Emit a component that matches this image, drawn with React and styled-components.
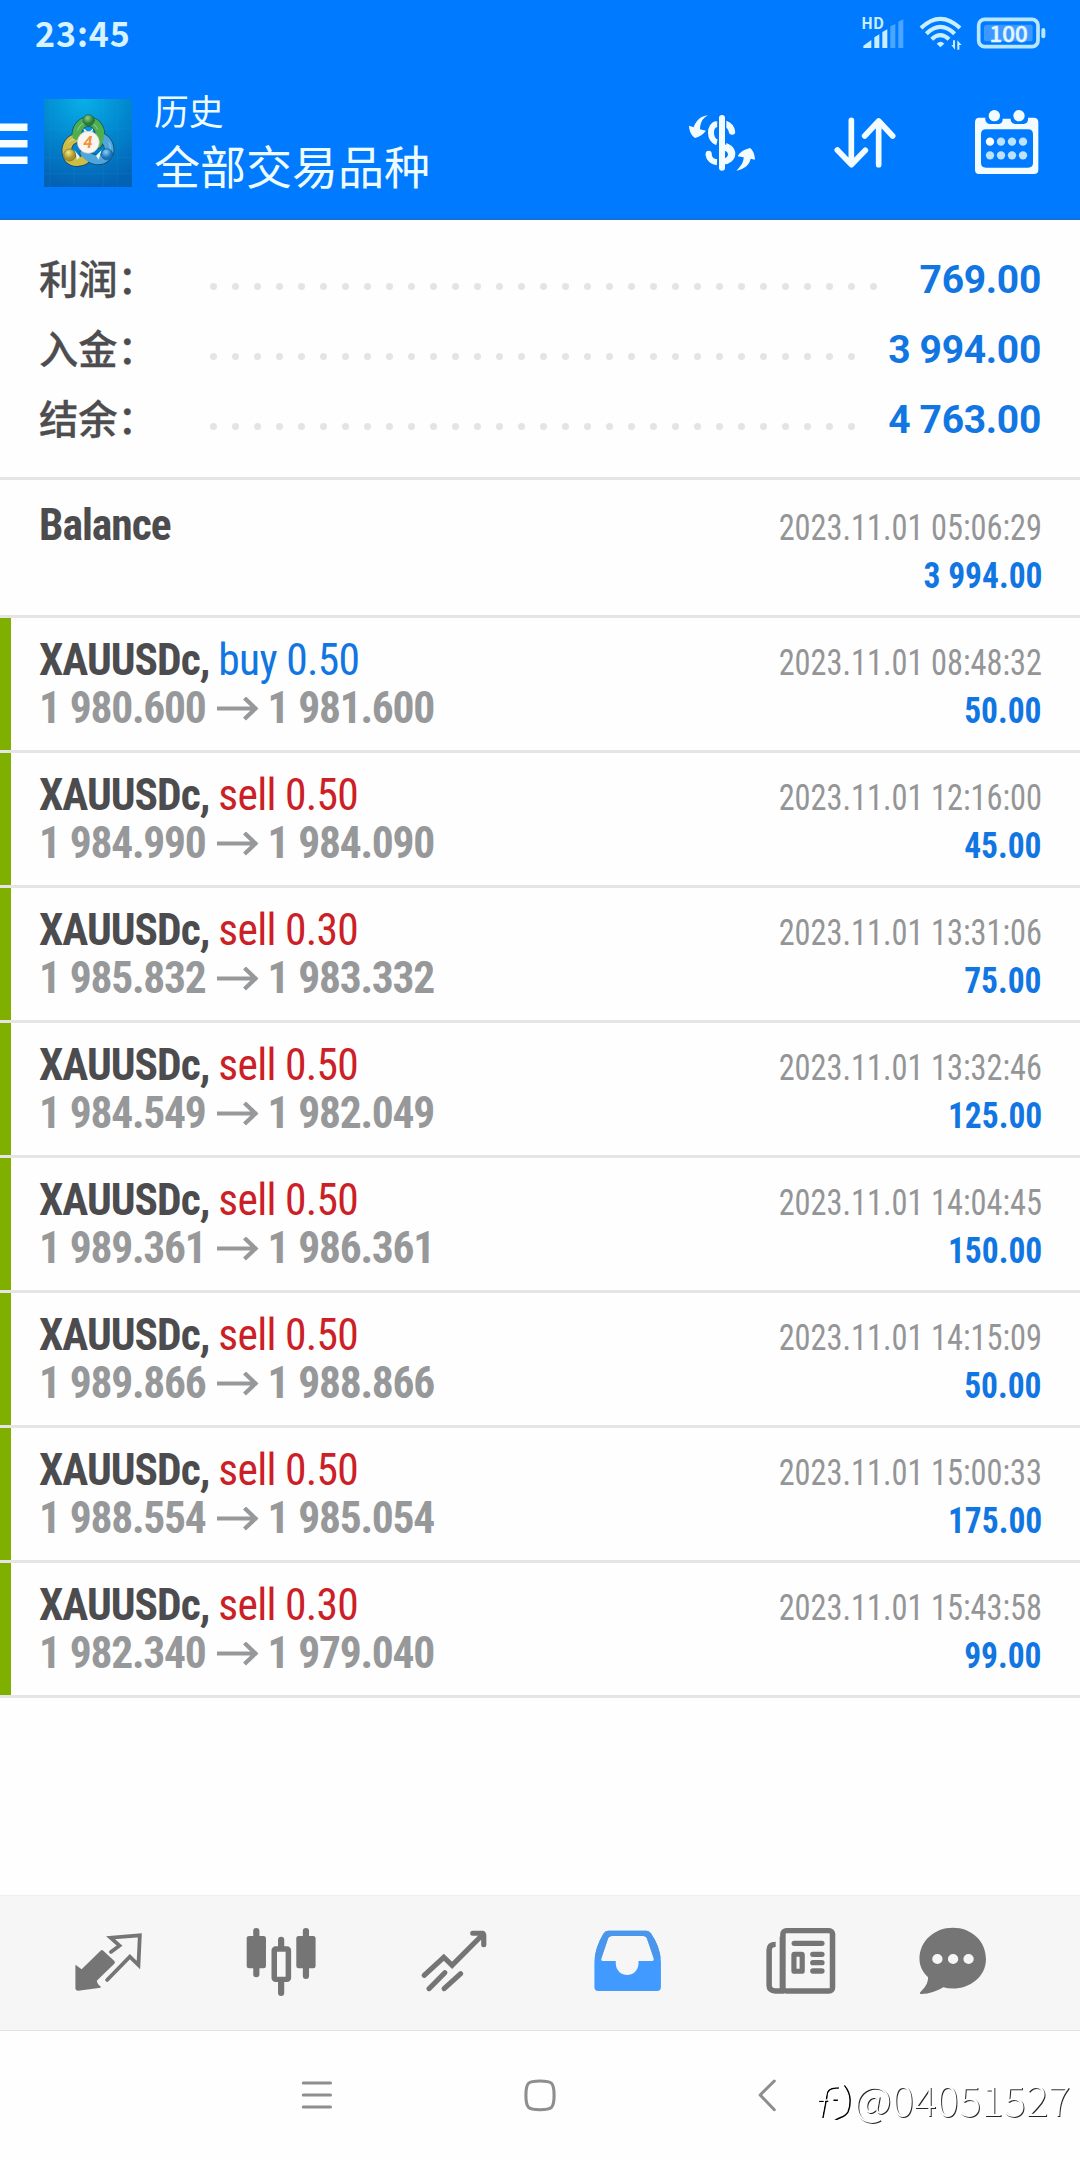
import React from "react";
import styled, { createGlobalStyle } from "styled-components";

const CJK = `"Noto Sans CJK SC", "Noto Sans", sans-serif`;
const LATIN = `Roboto, "Noto Sans CJK SC", sans-serif`;
const BLUE = "#1276e2";

const GlobalStyle = createGlobalStyle`
  * { box-sizing: border-box; }
  body { margin: 0; background: #fefefe; font-family: ${LATIN}; }
`;

const Screen = styled.div`
  position: relative;
  width: 1080px;
  height: 2160px;
  display: flex;
  flex-direction: column;
  overflow: hidden;
  background: #fefefe;
`;

const Header = styled.header`
  height: 220px;
  flex: none;
  background: #007aff;
  border-bottom: 2px solid #1272d8;
  color: #fff;
`;

const StatusBar = styled.div`
  height: 66px;
  display: flex;
  align-items: center;
  justify-content: space-between;
  padding: 0 34px 0 35px;
`;

const Clock = styled.time`
  font: 700 34px/40px ${CJK};
  letter-spacing: 0.9px;
  color: #d6f3ff;
`;

const StatusIcons = styled.div`
  display: flex;
  align-items: center;
  gap: 14px;
`;

const AppBar = styled.div`
  height: 154px;
  display: flex;
  align-items: center;
  padding-right: 37px;
`;

const Logo = styled.div`
  width: 88px;
  height: 88px;
  margin-left: 16px;
  svg { display: block; }
`;

const Titles = styled.div`
  flex: 1;
  display: flex;
  flex-direction: column;
  margin-left: 22px;
  padding-bottom: 4px;
  gap: 2px;
  font-family: ${CJK};
  color: #eefbff;
`;

const Subtitle = styled.span`
  font-size: 34.8px;
  line-height: 44px;
`;

const Title = styled.h1`
  margin: 0;
  font-size: 46px;
  font-weight: 400;
  line-height: 60px;
`;

const Actions = styled.div`
  display: flex;
  gap: 70.5px;
`;

const Summary = styled.section`
  height: 260px;
  flex: none;
  padding: 24px 39px 0 39px;
  border-bottom: 3px solid #e5e5e5;
`;

const SummaryRow = styled.div`
  height: 70px;
  display: flex;
  align-items: center;
`;

const Label = styled.span`
  width: 171px;
  padding-bottom: 5px;
  font: 500 39.3px/60px ${CJK};
  -webkit-text-stroke: 0.3px #4d4d4f;
  color: #4d4d4f;
`;

const Leader = styled.div`
  flex: 1;
  height: 7px;
  margin: 15px 27px 0 0;
  display: flex;
  flex-wrap: wrap;
  column-gap: 15px;
  overflow: hidden;
`;

const Dot = styled.i`
  width: 7px;
  height: 7px;
  border-radius: 50%;
  background: #e4e4e4;
`;

const Total = styled.span`
  font: 700 39px/48px ${LATIN};
  letter-spacing: -0.3px;
  color: ${BLUE};
  padding-top: 1px;
`;

const Row = styled.article`
  height: ${(p) => (p.$trade ? 135 : 138)}px;
  flex: none;
  padding: ${(p) => (p.$trade ? 0 : 3)}px 38px 0 0;
  display: flex;
  justify-content: space-between;
  border-bottom: 3px solid #e5e5e5;
  font-stretch: 75%;
`;

const Stripe = styled.div`
  width: 11px;
  height: 132px;
  background: ${(p) => (p.$closed ? "#7fb000" : "transparent")};
`;

const Lines = styled.div`
  flex: ${(p) => (p.$end ? "none" : 1)};
  display: flex;
  flex-direction: column;
  align-items: ${(p) => (p.$end ? "flex-end" : "flex-start")};
  padding: 18px 0 0 ${(p) => (p.$end ? 0 : 28)}px;
  line-height: 48px;
  white-space: pre;
`;

const Symbol = styled.div`
  font-size: 43.5px;
  font-weight: 700;
  letter-spacing: -1px;
  color: #4c4c4e;
  padding-top: 1px;
  height: 49px;
`;

const Side = styled.span`
  font-weight: 400;
  letter-spacing: -0.7px;
  color: ${(p) => (p.$side === "buy" ? BLUE : "#cb2026")};
`;

const Prices = styled.div`
  display: flex;
  align-items: center;
  font-size: 43.5px;
  font-weight: 700;
  letter-spacing: -1.25px;
  word-spacing: 1.2px;
  color: #97989a;
  svg { margin: 0 8.5px 0 11.5px; }
`;

const Stamp = styled.time`
  font-size: 37px;
  padding-top: 3px;
  height: 48px;
  color: #949597;
  transform: scaleX(0.875);
  transform-origin: right center;
`;

const Profit = styled.span`
  font-size: 37px;
  font-weight: 700;
  padding-top: 3px;
  color: ${BLUE};
  transform: scaleX(0.905);
  transform-origin: right center;
`;

const Spacer = styled.div`
  flex: 1;
`;

const TabBar = styled.nav`
  height: 136px;
  flex: none;
  display: grid;
  grid-template-columns: repeat(5, 173px) 132px;
  justify-items: center;
  padding: 27px 0 0 22px;
  background: #f6f6f6;
  border-top: 1px solid #efefef;
  border-bottom: 1px solid #e2e2e2;
`;

const SystemNav = styled.nav`
  height: 129px;
  flex: none;
  display: grid;
  grid-template-columns: repeat(3, 225px);
  justify-content: center;
  justify-items: center;
  padding-top: 42px;
`;

const Watermark = styled.div`
  position: absolute;
  right: 9px;
  bottom: 32px;
  display: flex;
  align-items: center;
  font: 300 41.4px/60px ${CJK};
  letter-spacing: 0.2px;
  color: #fff;
  text-shadow: 1px 1px 0 rgba(0, 0, 0, 0.85);
  will-change: transform;
`;

const Icon = styled.svg`
  display: block;
  overflow: visible;
`;

const Pic = ({ w = 72, h = 72, box, children }) => (
  <Icon width={w} height={h} viewBox={box} preserveAspectRatio="none" fill="none" strokeLinecap="round" strokeLinejoin="round">
    {children}
  </Icon>
);

const Signal = () => (
  <Pic w={44} h={35} box="602 45 132 105">
    <text x="603" y="85" fontSize="46" fontWeight="600" fontFamily="Noto Sans CJK SC, sans-serif" fill="#c8eeff">HD</text>
    <path d="M609 141v-7l24-17v24zM642 141v-32l15-9v41zM666 141V93l15-8v56z" fill="#c8eeff" />
    <path d="M690 141V76l15-7v72zM714 141V62l15-7v86z" fill="#4ba6ff" />
  </Pic>
);

const Wifi = () => (
  <Pic w={44} h={36} box="776 48 132 108">
    <g stroke="#c8eeff" strokeWidth="12.500" strokeLinecap="butt">
      <path d="M782 87q58-55 117 0" />
      <path d="M798 104q42-41 85 0" />
      <path d="M814 121q26-25 52 0" />
    </g>
    <path d="M829 134q12-12 23 0l-12 11z" fill="#c8eeff" />
    <path d="M884 124v28l-11-14h5v-14zM891 152v-28l13 14h-7v14z" fill="#c8eeff" />
  </Pic>
);

const Battery = () => (
  <Pic w={69} h={32} box="950 51 207 96">
    <rect x="955" y="58" width="178" height="82" rx="18" stroke="#b9e6ff" strokeWidth="11" />
    <rect x="971" y="74" width="146" height="50" rx="8" fill="#3d99ff" />
    <rect x="1143" y="84" width="12" height="31" rx="6" fill="#b9e6ff" />
    <text x="1045" y="125" textAnchor="middle" fontSize="67" fontWeight="500" fontFamily="Noto Sans CJK SC, sans-serif" fill="#e2f7ff" stroke="#e2f7ff" strokeWidth="1.500">100</text>
  </Pic>
);

const Menu = () => (
  <Pic w={28} h={42} box="0 121 28 42">
    <path d="M0 122.500h27.500v7.500H0zM0 139h27.500v7.500H0zM0 155.500h27.500v7.500H0z" fill="#f6fdff" />
  </Pic>
);

const MetaLogo = () => (
  <Pic w={88} h={88} box="12 12 264 264">
    <defs>
      <radialGradient id="sky" cx=".45" cy="0" r="1">
        <stop offset="0" stopColor="#08b0e8" />
        <stop offset=".55" stopColor="#0284cd" />
        <stop offset="1" stopColor="#0462b4" />
      </radialGradient>
      <radialGradient id="green" cx=".4" cy=".3"><stop offset="0" stopColor="#8fd080" /><stop offset="1" stopColor="#277c37" /></radialGradient>
      <radialGradient id="gold" cx=".4" cy=".3"><stop offset="0" stopColor="#f3ea84" /><stop offset="1" stopColor="#a8932a" /></radialGradient>
      <radialGradient id="azure" cx=".4" cy=".3"><stop offset="0" stopColor="#8ad4f6" /><stop offset="1" stopColor="#1a71b8" /></radialGradient>
    </defs>
    <rect x="12" y="12" width="264" height="264" fill="url(#sky)" />
    <path d="M30 12v264M102 12v264M190 12v264M232 12v264M12 102h264M12 188h264M12 236h264" stroke="#44b4e8" strokeOpacity=".16" strokeWidth="2" />
    <g strokeWidth="31" stroke="#173f50" strokeOpacity=".75">
      <path d="M111 128c-34 10-36 42-24 62 12 14 35 12 47 4" />
      <path d="M186 128c26 16 26 44 13 57-20 19-51 8-65-11" />
      <path d="M110 122c0-56 70-56 70-2l-7 26" />
    </g>
    <g strokeWidth="26">
      <path d="M111 128c-34 10-36 42-24 62 12 14 35 12 47 4" stroke="#cdbd45" />
      <path d="M186 128c26 16 26 44 13 57-20 19-51 8-65-11" stroke="#4fa6dc" />
      <path d="M110 122c0-56 70-56 70-2l-7 26" stroke="#4fae50" />
    </g>
    <path d="M113 105c11-30 48-33 59-3M84 143c7-8 14-9 19-10M207 143c7 12 5 29-5 37" stroke="#fff" strokeOpacity=".4" strokeWidth="3" />
    <path d="M130 100l16 12 14-12-4 14h-22zM103 165l17 21-9 8zM185 165l-17 17 8 12z" fill="#e9f5ea" />
    <g stroke="#22604d" strokeWidth="2">
      <circle cx="146" cy="76" r="17" fill="url(#green)" />
      <circle cx="89" cy="180" r="18" fill="url(#gold)" stroke="#776d27" />
      <circle cx="201" cy="178" r="17" fill="url(#azure)" stroke="#185b91" />
    </g>
    <circle cx="145" cy="142" r="33" fill="#faf5f0" stroke="#c9c5ad" strokeWidth="2" />
    <text x="144" y="160" textAnchor="middle" fontSize="50" fontWeight="700" fontStyle="italic" fontFamily="Roboto, sans-serif" fill="#f0953c">4</text>
  </Pic>
);

const Currency = () => (
  <Pic box="78 321 216 216">
    <path d="M144 346c-17 9-23 22-24 42l18 4c-10 12-20 19-33 22-10-8-17-18-18-37l14 5c7-20 21-34 43-36z" fill="#f2fcff" />
    <path d="M229 512c17-16 22-28 22-40l-18-3c6-12 18-20 37-25 8 6 14 17 15 35l-13-3c-4 18-18 31-43 36z" fill="#f2fcff" />
    <path d="M216 395c-4-27-34-26-34-26" stroke="#f2fcff" strokeWidth="19" />
    <path d="M171 372c-24 3-24 48 0 55M182 433c47 8 45 50 3 54M145 462c2 14 13 24 26 25" stroke="#f2fcff" strokeWidth="18" strokeLinecap="butt" />
    <circle cx="146" cy="461" r="9" fill="#f2fcff" />
    <path d="M186 354v150" stroke="#007aff" strokeWidth="26" strokeLinecap="butt" />
    <path d="M186 440c37 6 34 39 3 46" stroke="#f2fcff" strokeWidth="18" strokeLinecap="butt" />
    <path d="M186 354v149" stroke="#f2fcff" strokeWidth="18" />
  </Pic>
);

const Sort = () => (
  <Pic box="507 321 216 216">
    <path d="M574 361v132M532 450l42 44 42-43M656 494V363M614 408l42-45 42 45" stroke="#f2fcff" strokeWidth="17" />
  </Pic>
);

const Calendar = () => (
  <Pic box="933 321 216 216">
    <path fillRule="evenodd" d="M957 353h19v6q2 12 14 13h27q10-1 11-12v-4h24v4q2 11 13 12h26q12-2 13-13v-6h18q13 0 13 14v142q0 13-13 13H957q-12 0-12-13V367q0-14 12-14zM978 388q-15 0-15 15v86q0 14 15 14h126q15 0 15-14v-86q0-15-15-15z" fill="#f2fcff" />
    <circle cx="1003" cy="347" r="17" fill="#f2fcff" />
    <circle cx="1077" cy="347" r="17" fill="#f2fcff" />
    {[0, 1, 2, 3].map((i) => (
      <g key={i}>
        <circle cx={990 + i * 33} cy="425" r="12.500" fill={i ? "#bce2ff" : "#fff"} />
        <circle cx={990 + i * 33} cy="466" r="12.500" fill="#bce2ff" />
      </g>
    ))}
  </Pic>
);

const QuotesIcon = () => (
  <Pic box="212 99 209 216">
    <path d="M219 224l18 14 55-56q4-4 8 0l32 31q4 4 0 8l-51 51q3 13 11 17v4l-65 9q-8 0-8-8z" fill="#757575" />
    <path d="M322 186l25-19-26-24 85-7-4 89-25-25-66 70" stroke="#757575" strokeWidth="11" strokeLinejoin="miter" />
  </Pic>
);

const ChartIcon = () => (
  <Pic box="714 99 209 216">
    <g fill="#757575">
      <rect x="716" y="138" width="56" height="97" rx="7" />
      <rect x="860" y="138" width="56" height="97" rx="7" />
    </g>
    <rect x="796" y="177" width="41" height="91" rx="4" stroke="#757575" strokeWidth="16" />
    <path d="M744 123v130M888 123v135M816 149v20M816 276v33" stroke="#757575" strokeWidth="18" />
  </Pic>
);

const TradeIcon = () => (
  <Pic box="1217 99 209 216">
    <g stroke="#757575" strokeWidth="15">
      <path d="M1232 256l57-54 24 24 82-85" strokeLinejoin="miter" />
      <path d="M1373 130h30l2 5v29" />
      <path d="M1386 130h20v22z" fill="#757575" strokeWidth="4" />
      <path d="M1246 296l46-48M1290 296l48-45" />
    </g>
  </Pic>
);

const HistoryIcon = () => (
  <Pic box="151 99 209 216">
    <path fillRule="evenodd" d="M198 122h111q8 0 13 8 28 43 29 85v77q0 11-11 11H169q-11 0-11-11v-77q1-42 26-84 6-9 14-9zM209 138q-8 0-11 6l-20 62q-1 7 6 7h36v8c3 45 63 45 66 0v-8h38q7 0 6-7l-20-62q-3-6-10-6z" fill="#419aff" />
    <path d="M198 122h111q8 0 13 8 25 38 28 75h-18l-22-61q-3-6-10-6h-91q-8 0-11 6l-20 61h-19q4-37 25-74 6-9 14-9z" fill="#4a96ea" />
  </Pic>
);

const NewsIcon = () => (
  <Pic box="654 99 209 216">
    <g stroke="#757575" strokeWidth="16">
      <rect x="706" y="122" width="144" height="181" rx="10" />
      <path d="M685 163c-14 0-19 7-19 17v106q0 17 18 17h25" strokeLinecap="butt" />
      <path d="M739 160h80M793 193h26M793 218h26M793 243h26" />
      <rect x="738" y="193" width="24" height="51" rx="2" strokeWidth="15" />
    </g>
    <path d="M704 140v156" stroke="#757575" strokeWidth="15" strokeLinecap="butt" />
  </Pic>
);

const ChatIcon = () => (
  <Pic box="1094.8 99 209 216">
    <path fillRule="evenodd" d="M1199 113c54 0 96 40 96 94 0 64-66 101-124 85-20 12-39 20-64 20-5 0-5-3-2-6 15-15 22-28 22-44-16-16-25-34-25-55 0-54 43-94 97-94zM1139 207a15 15 0 1 0 30 0a15 15 0 1 0-30 0zM1184.500 207a15 15 0 1 0 30 0a15 15 0 1 0-30 0zM1229.500 207a15 15 0 1 0 30 0a15 15 0 1 0-30 0z" fill="#757575" />
  </Pic>
);

const Arrow = () => (
  <svg width="42" height="24" viewBox="0 0 42 24" fill="none" stroke="#97989a" strokeWidth="4.200">
    <path d="M0 11.500h40M27.500 1l11 10.500-11 10.500" />
  </svg>
);

const WatermarkLogo = () => (
  <svg width="38" height="44" viewBox="6 0 114 132" fill="none" strokeLinecap="round">
    <g stroke="#000" strokeWidth="4.500">
      <path d="M73 36c-24-2-34 8-34 24l-12 64M17 76h24M92 30c22 26 18 58 10 78-10 19-31 15-43 29M60 73h10" />
    </g>
    <path d="M71 32c-24-2-36 8-36 24l-12 64M14 72h24M86 28c22 26 19 56 12 74-10 19-31 15-43 29" stroke="#fff" strokeWidth="4" />
  </svg>
);

const totals = [
  ["利润：", "769.00"],
  ["入金：", "3 994.00"],
  ["结余：", "4 763.00"],
];

const trades = [
  ["buy", "0.50", "1 980.600", "1 981.600", "08:48:32", "50.00"],
  ["sell", "0.50", "1 984.990", "1 984.090", "12:16:00", "45.00"],
  ["sell", "0.30", "1 985.832", "1 983.332", "13:31:06", "75.00"],
  ["sell", "0.50", "1 984.549", "1 982.049", "13:32:46", "125.00"],
  ["sell", "0.50", "1 989.361", "1 986.361", "14:04:45", "150.00"],
  ["sell", "0.50", "1 989.866", "1 988.866", "14:15:09", "50.00"],
  ["sell", "0.50", "1 988.554", "1 985.054", "15:00:33", "175.00"],
  ["sell", "0.30", "1 982.340", "1 979.040", "15:43:58", "99.00"],
];

export default function App() {
  return (
    <Screen>
      <GlobalStyle />
      <Header>
        <StatusBar>
          <Clock>23:45</Clock>
          <StatusIcons><Signal /><Wifi /><Battery /></StatusIcons>
        </StatusBar>
        <AppBar>
          <Menu />
          <Logo><MetaLogo /></Logo>
          <Titles>
            <Subtitle>历史</Subtitle>
            <Title>全部交易品种</Title>
          </Titles>
          <Actions><Currency /><Sort /><Calendar /></Actions>
        </AppBar>
      </Header>
      <Summary>
        {totals.map(([label, value]) => (
          <SummaryRow key={label}>
            <Label>{label}</Label>
            <Leader>{Array.from({ length: 34 }, (_, i) => <Dot key={i} />)}</Leader>
            <Total>{value}</Total>
          </SummaryRow>
        ))}
      </Summary>
      <Row>
        <Stripe />
        <Lines>
          <Symbol>Balance</Symbol>
        </Lines>
        <Lines $end>
          <Stamp>2023.11.01 05:06:29</Stamp>
          <Profit>3 994.00</Profit>
        </Lines>
      </Row>
      {trades.map(([side, lots, open, close, time, profit]) => (
        <Row $trade key={time}>
          <Stripe $closed />
          <Lines>
            <Symbol>XAUUSDc, <Side $side={side}>{side} {lots}</Side></Symbol>
            <Prices>{open}<Arrow />{close}</Prices>
          </Lines>
          <Lines $end>
            <Stamp>2023.11.01 {time}</Stamp>
            <Profit>{profit}</Profit>
          </Lines>
        </Row>
      ))}
      <Spacer />
      <TabBar>
        <QuotesIcon /><ChartIcon /><TradeIcon /><HistoryIcon /><NewsIcon /><ChatIcon />
      </TabBar>
      <SystemNav>
        <Pic w={44} h={44} box="67 128 128 132">
          <path d="M97 158h79M97 194h79M97 230h79" stroke="#8e8e8e" strokeWidth="9" />
        </Pic>
        <Pic w={44} h={44} box="720 128 128 132">
          <path d="M784 152c34 0 41 4 41 43s-7 43-41 43-41-4-41-43 7-43 41-43z" stroke="#8e8e8e" strokeWidth="9" />
        </Pic>
        <Pic w={44} h={44} box="1373 128 128 132">
          <path d="M1464 152l-41 42 41 44" stroke="#8e8e8e" strokeWidth="9" />
        </Pic>
      </SystemNav>
      <Watermark><WatermarkLogo />@04051527</Watermark>
    </Screen>
  );
}
